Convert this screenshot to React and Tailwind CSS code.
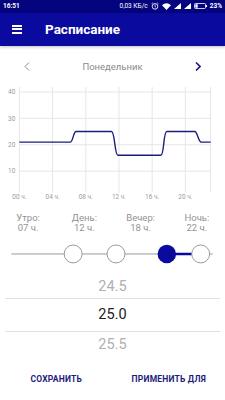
import React from "react";

const font = { fontFamily: "Roboto, 'Noto Sans', sans-serif" };

// часы на оси X и значения сетки
const hours = [0, 4, 8, 12, 16, 20];
const levels = [40, 30, 20, 10];
const xOf = (h) => 19 + h * 8.333;
const yOf = (v) => 116 - v * 2.65;

const periods = [
  { name: "Утро:", time: "07 ч." },
  { name: "День:", time: "12 ч." },
  { name: "Вечер:", time: "18 ч." },
  { name: "Ночь:", time: "22 ч." },
];

function StatusBar() {
  return (
    <div className="h-[13px] bg-[#04047e] flex items-center justify-between px-[3px] text-white text-[6.5px] font-bold leading-none">
      <span>16:51</span>
      <div className="flex items-center gap-[3px]">
        <span className="font-normal">0,03 КБ/с</span>
        {/* будильник */}
        <svg width="8" height="8" viewBox="0 0 8 8">
          <circle cx="4" cy="4.4" r="2.8" fill="none" stroke="white" strokeWidth="0.9" />
          <path d="M4 2.8V4.5L5 5.2" stroke="white" strokeWidth="0.8" fill="none" />
          <path d="M0.6 1.8L1.8 0.8M7.4 1.8L6.2 0.8" stroke="white" strokeWidth="0.8" />
        </svg>
        {/* wifi */}
        <svg width="9" height="7" viewBox="0 0 9 7">
          <path d="M0 2.2Q4.5 -1.5 9 2.2L4.5 7Z" fill="white" />
        </svg>
        <svg width="7" height="6" viewBox="0 0 7 6">
          <path d="M0 6L7 0V6Z" fill="white" />
        </svg>
        <svg width="7" height="6" viewBox="0 0 7 6">
          <path d="M0 6L7 0V6Z" fill="white" />
        </svg>
        {/* батарея */}
        <svg width="13" height="6" viewBox="0 0 13 6">
          <rect x="0.5" y="0.5" width="11" height="5" rx="1" fill="none" stroke="white" strokeWidth="0.8" />
          <rect x="1.3" y="1.3" width="2.4" height="3.4" fill="white" />
          <rect x="11.8" y="2" width="1.2" height="2" fill="white" />
        </svg>
        <span>23%</span>
      </div>
    </div>
  );
}

function Chart() {
  const line =
    `M19 ${yOf(21)} L70 ${yOf(21)} C73 ${yOf(21)} 73 ${yOf(25)} 76 ${yOf(25)} ` +
    `L111.5 ${yOf(25)} C115 ${yOf(25)} 114.5 ${yOf(16)} 118 ${yOf(16)} ` +
    `L161 ${yOf(16)} C164.5 ${yOf(16)} 163.5 ${yOf(25)} 167 ${yOf(25)} ` +
    `L195 ${yOf(25)} C198 ${yOf(25)} 198.5 ${yOf(21)} 201.5 ${yOf(21)} L211 ${yOf(21)}`;

  return (
    <svg width="225" height="120" viewBox="0 0 225 120" className="block">
      {levels.map((v) => (
        <g key={v}>
          <line x1="19" x2="211" y1={yOf(v)} y2={yOf(v)} stroke="#e6e6e6" strokeWidth="1" />
          <text x="15" y={yOf(v) + 2.3} fontSize="6.5" fill="#9a9a9a" textAnchor="end" style={font}>
            {v}
          </text>
        </g>
      ))}
      {hours.map((h) => (
        <g key={h}>
          <line x1={xOf(h)} x2={xOf(h)} y1="5" y2="111" stroke="#e6e6e6" strokeWidth="1" />
          <text x={xOf(h)} y="117.5" fontSize="6.5" fill="#9a9a9a" textAnchor="middle" style={font}>
            {String(h).padStart(2, "0")} ч.
          </text>
        </g>
      ))}
      <line x1="211" x2="211" y1="5" y2="111" stroke="#e6e6e6" strokeWidth="1" />
      <path d={line} fill="none" stroke="#1c1c7c" strokeWidth="1.4" />
    </svg>
  );
}

function Slider() {
  const points = [73, 116, 167, 201];
  return (
    <svg width="225" height="22" viewBox="0 0 225 22" className="block mt-[10px]">
      <line x1="11" x2="213" y1="11" y2="11" stroke="#9a9a9a" strokeWidth="1" />
      <line x1="167" x2="201" y1="11" y2="11" stroke="#0a0a9e" strokeWidth="2.6" />
      {points.map((x, i) =>
        i === 2 ? (
          <circle key={x} cx={x} cy="11" r="9.3" fill="#0a0a9e" />
        ) : (
          <circle key={x} cx={x} cy="11" r="9" fill="white" stroke="#9a9a9a" strokeWidth="1" />
        )
      )}
    </svg>
  );
}

export default function App() {
  return (
    <div className="w-[225px] h-[400px] bg-white overflow-hidden flex flex-col" style={font}>
      <StatusBar />

      {/* тулбар */}
      <div className="h-[33px] bg-[#0a0a9e] flex items-center pl-[12px] shadow-[0_1px_3px_rgba(0,0,0,0.25)] relative">
        <div className="flex flex-col gap-[1.5px] w-[10px]">
          <div className="h-[2px] bg-white" />
          <div className="h-[2px] bg-white" />
          <div className="h-[2px] bg-white" />
        </div>
        <span className="ml-[23px] text-white text-[13.5px] font-bold leading-none">Расписание</span>
      </div>

      {/* выбор дня */}
      <div className="h-[36px] pt-[6px] flex items-center justify-between px-[24px]">
        <svg width="6" height="9" viewBox="0 0 6 9">
          <path d="M5 0.5L1 4.5L5 8.5" fill="none" stroke="#8a8a8a" strokeWidth="1" />
        </svg>
        <span className="text-[9.5px] text-[#8a8a8a]">Понедельник</span>
        <svg width="6" height="9" viewBox="0 0 6 9">
          <path d="M1 0.5L5 4.5L1 8.5" fill="none" stroke="#1c1c7c" strokeWidth="1.6" />
        </svg>
      </div>

      <Chart />

      {/* периоды */}
      <div className="grid grid-cols-4 pt-[12px] text-[9.5px] leading-[10px] text-[#929292] text-center">
        {periods.map((p) => (
          <div key={p.name} className="flex flex-col">
            <span>{p.name}</span>
            <span>{p.time}</span>
          </div>
        ))}
      </div>

      <Slider />

      {/* выбор температуры */}
      <div className="mt-[11px] flex flex-col items-stretch">
        <div className="h-[22px] flex items-center justify-center text-[14.5px] text-[#b0b0b0]">24.5</div>
        <div className="h-px bg-[#e0e0e0] mx-[5px]" />
        <div className="h-[32px] flex items-center justify-center text-[14.5px] text-[#222]">25.0</div>
        <div className="h-px bg-[#e0e0e0] mx-[5px]" />
        <div className="h-[26px] flex items-center justify-center text-[14.5px] text-[#b0b0b0]">25.5</div>
      </div>

      {/* кнопки */}
      <div className="h-[42px] grid grid-cols-2 items-center text-center text-[8.5px] font-bold text-[#1c1c7c] tracking-[0.2px]">
        <span>СОХРАНИТЬ</span>
        <span>ПРИМЕНИТЬ ДЛЯ</span>
      </div>
    </div>
  );
}
